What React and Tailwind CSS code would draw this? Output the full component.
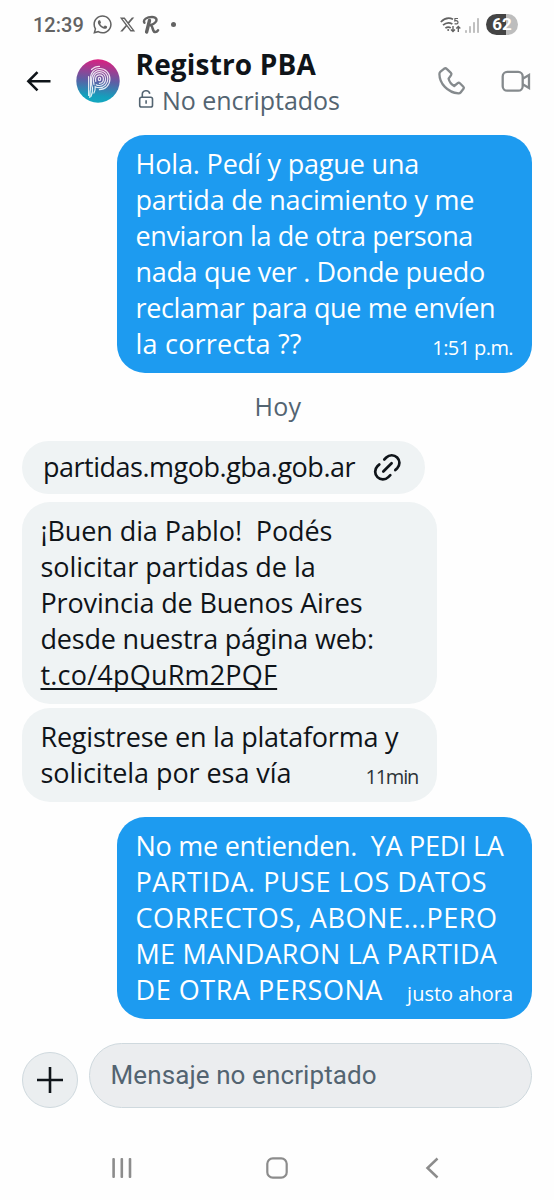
import { FaWhatsapp, FaXTwitter } from 'react-icons/fa6';

// Letter spacing is set per line, so every message is stored as lines
const FIRST_MESSAGE = [
    { text: 'Hola. Pedí y pague una', className: 'tracking-[-0.17px]' },
    { text: 'partida de nacimiento y me', className: 'tracking-[-0.23px]' },
    { text: 'enviaron la de otra persona', className: 'tracking-[-0.38px]' },
    { text: 'nada que ver . Donde puedo', className: 'tracking-[-0.34px]' },
    { text: 'reclamar para que me envíen', className: 'tracking-[-0.37px]' },
    { text: 'la correcta ??', className: 'tracking-[0.22px]' },
];

const REPLY = [
    { text: '¡Buen dia Pablo!  Podés', className: 'tracking-[-0.107px]' },
    { text: 'solicitar partidas de la', className: 'tracking-[-0.04px]' },
    { text: 'Provincia de Buenos Aires', className: 'tracking-[-0.15px]' },
    { text: 'desde nuestra página web:', className: 'tracking-[-0.2px]' },
    { text: 't.co/4pQuRm2PQF', link: true, className: 'tracking-[0.203px]' },
];

const REPLY_END = [
    { text: 'Registrese en la plataforma y', className: 'tracking-[-0.23px]' },
    { text: 'solicitela por esa vía', className: 'tracking-[-0.06px]' },
];

const LAST_MESSAGE = [
    { text: 'No me entienden.  YA PEDI LA', className: 'tracking-[-0.27px]' },
    { text: 'PARTIDA. PUSE LOS DATOS', className: 'tracking-[0.5px]' },
    { text: 'CORRECTOS, ABONE...PERO', className: 'tracking-[0.57px]' },
    { text: 'ME MANDARON LA PARTIDA', className: 'tracking-[0.21px]' },
    { text: 'DE OTRA PERSONA', className: 'tracking-[0.54px]' },
];

function StatusBar() {
    return (
        <div className="flex items-center h-[49px] pl-[33px] pr-9 text-[#636363]">
            <span className="w-[51px] font-[Roboto,sans-serif] font-medium text-[20px] leading-none">12:39</span>
            <FaWhatsapp size={21} className="ml-2" />
            <FaXTwitter size={17} className="ml-1.5" />
            {/* Delivery app mark */}
            <svg width="18" height="20" viewBox="0 0 18 20" className="ml-1.5" fill="none"
                stroke="currentColor" strokeLinecap="round" strokeLinejoin="round">
                <path d="M7.5 5.5 4.6 17" strokeWidth="3.4" />
                <path d="M2.4 7.8C.6 4.4 5 2 10 2c4.600 0 5.600 3.200 3.200 5.500-1.200 1.300-2.600 2-4.200 2.400" strokeWidth="2.400" />
                <path d="M9 10.600c2 .4 1.400 5.800 3.800 6.400 1.400.2 2.600-.7 3.200-1.600" strokeWidth="2.600" />
            </svg>
            <span className="ml-[11px] size-[5px] rounded-full bg-[#636363]" />

            <div className="flex items-center ml-auto">
                <svg width="21" height="18" viewBox="0 0 21 18" fill="none" stroke="currentColor" strokeWidth="1.7">
                    <path d="M.8 6C4.5 2.2 9 1.4 13 3.2" />
                    <path d="M3 9.2c3-2.7 6.2-3 9.4-1.2" />
                    <path d="M5.4 12.2c1.900-1.500 3.600-1.500 5.400-.3" />
                    <circle cx="8.2" cy="14" r="1" fill="currentColor" stroke="none" />
                    <path d="M18 2.500h-3l-.2 2.400c1.600-.5 3.200 0 3.200 1.500s-1.800 1.900-3.400 1.200" strokeWidth="1.2" />
                    <path d="M13 10v5.500m-2-2 2 2 2-2M18.300 16v-5.500m-2 2 2-2 2 2" strokeWidth="1.4" />
                </svg>
                <svg width="15" height="16" viewBox="0 0 15 16" className="ml-1" fill="#c0c0c0">
                    <rect x="0" y="13" width="2" height="3" rx=".8" />
                    <rect x="4" y="9" width="2" height="7" rx=".8" />
                    <rect x="8" y="5" width="2" height="11" rx=".8" />
                    <rect x="12" y="1" width="2" height="15" rx=".8" />
                </svg>
                <div className="flex items-center justify-center ml-1.5 w-8 h-[21px] rounded-full
                    bg-linear-to-r from-[#444] from-62% to-[#bdbdbd] to-62%
                    font-[Roboto,sans-serif] font-bold text-[17px] leading-none text-white">
                    62
                </div>
            </div>
        </div>
    );
}

function Avatar() {
    return (
        <svg width="44" height="44" viewBox="0 0 44 44" fill="none">
            <defs>
                <linearGradient id="avatar" x1="0.55" y1="0" x2="0.45" y2="1">
                    <stop offset="0" stopColor="#dc1f80" />
                    <stop offset="0.5" stopColor="#5c5fa5" />
                    <stop offset="0.85" stopColor="#149fbc" />
                    <stop offset="1" stopColor="#14a8c0" />
                </linearGradient>
            </defs>
            <circle cx="22" cy="22" r="21.7" fill="url(#avatar)" />
            {/* Fingerprint */}
            <g stroke="#fff" strokeOpacity="0.85" strokeWidth="1.2" strokeLinecap="round">
                <ellipse cx="23.5" cy="20" rx="1.2" ry="1.6" />
                <path d="M19.8 22.500c-1-4 .8-6.700 3.700-6.700 2.500 0 3.900 2 3.900 4.300s-1.600 4.200-4 4.200" />
                <path d="M18 25.500c-2-6.500.5-11.800 5.500-11.800 4 0 6.100 3 6.100 6.400s-2.600 6.400-6.200 6.400c-1.400 0-2.400-.3-3.200-.8" />
                <path d="M16.500 29c-3-9.500.4-17.400 7-17.400 5.200 0 8.300 3.900 8.300 8.500s-3.500 8.600-8.400 8.600c-1.800 0-3.200-.4-4.200-1 .2 2.300-.3 4.500-1.300 6.300" />
                <path d="M16.500 29c.3 3.500-.3 6-1.600 8.500M14.500 31V20c0-7 4-10.500 9-10.500 6.200 0 10.400 4.700 10.400 10.500 0 6-4.600 10.700-10.500 10.700" />
                <path d="M12.600 36.500V17.500M13.800 38.500l.4-7M15.500 10.500c2-2 4.500-3.200 8-3.200" />
            </g>
        </svg>
    );
}

function Header() {
    return (
        <header className="flex items-start h-[86px]">
            <svg width="26" height="22" viewBox="0 0 26 22" className="mt-[21px] ml-[26px]" fill="none" stroke="#0f1419"
                strokeWidth="2.6" strokeLinejoin="miter">
                <path d="M24.500 11.300H2.500M11.500 2.200l-9.100 9.100 9.100 9.100" />
            </svg>
            <div className="mt-[10px] ml-[23.5px]">
                <Avatar />
            </div>
            <div className="-mt-[2px] ml-4 whitespace-nowrap">
                <h1 className="font-bold text-[28px] leading-[35px] tracking-[0.165px] text-[#0f1419]">Registro PBA</h1>
                <div className="flex items-center">
                    <svg width="18" height="20" viewBox="0 0 18 20" className="ml-0.5 -mt-0.5" fill="none" stroke="#536471" strokeWidth="1.6">
                        <rect x="1.7" y="8.3" width="12.8" height="9.7" rx="1.8" />
                        <path d="M4.300 8.300V5.700a3.800 3.800 0 0 1 7.500-1M8.100 11.200v3.600" />
                    </svg>
                    <span className="ml-[6.5px] text-[25px] leading-9 tracking-[-0.051px] text-[#536471]">No encriptados</span>
                </div>
            </div>
            <svg width="30" height="32" viewBox="0 0 30 32" className="mt-4 ml-auto" fill="none" stroke="#858a8d"
                strokeWidth="2.3" strokeLinejoin="round">
                <path d="M8.300 3.600q1.300-.8 2.400.3l4.200 4q1 1 .2 2.200l-2.500 3.600q1.200 4.700 5.600 7.300l3.500-2.900q1.100-.9 2.200.2l3.500 3.400q1 1 .1 2.100l-2.900 3.700q-.8 1-2.200.9C11.500 27.400 3.500 18.500 3.400 8.900q0-1.400 1.100-2.300z" />
            </svg>
            <svg width="32" height="24" viewBox="0 0 32 24" className="mt-5 ml-[34.5px] mr-[22px]" fill="none" stroke="#858a8d"
                strokeWidth="2.3">
                <rect x="2.7" y="2.9" width="20" height="18.8" rx="4.5" />
                <path d="M22.700 9.800 29 6v13l-6.300-3.800" />
            </svg>
        </header>
    );
}

function Bubble({ lines, own, time, timeClass, className }) {
    const tone = own ? 'self-end bg-[#1d9bf0] text-white pl-[18.5px]' : 'bg-[#eff3f4] text-[#0f1419] pl-[18.5px]';
    return (
        <div className={`w-[415px] pt-[11px] pr-[19px] rounded-[28px] text-[27px] leading-9 whitespace-pre ${tone} ${className}`}>
            {lines.map((line, i) => (
                <div key={line.text} className="flex items-end justify-between h-9">
                    {line.link ? (
                        <a className={`underline decoration-2 underline-offset-[3px] [text-decoration-skip-ink:none] ${line.className}`}>
                            {line.text}
                        </a>
                    ) : (
                        <span className={line.className}>{line.text}</span>
                    )}
                    {time && i === lines.length - 1 && (
                        <span className={`text-[20px] leading-7 ${timeClass}`}>{time}</span>
                    )}
                </div>
            ))}
        </div>
    );
}

function LinkPill() {
    return (
        <div className="flex items-center w-[403px] h-[53px] pl-[21px] rounded-full bg-[#eff3f4] text-[#0f1419]">
            <span className="-mt-px w-[329.5px] text-[27px] leading-9 tracking-[-0.49px]">partidas.mgob.gba.gob.ar</span>
            <svg width="29" height="29" viewBox="0 0 29 29" fill="none" stroke="currentColor" strokeWidth="2.7" strokeLinecap="round">
                <path d="M11.300 6.500l2-2a7.600 7.600 0 0 1 10.900 10.800l-1.900 1.800" />
                <path d="M17.300 22.100l-2 2a7.600 7.600 0 0 1-10.900-10.800l1.900-1.800" />
                <path d="M10.300 18.500l8.300-8.300" />
            </svg>
        </div>
    );
}

function Composer() {
    return (
        <div className="flex items-end gap-[11px] mt-6 pl-[22px] pr-[22px]">
            <button className="flex items-center justify-center size-14 rounded-full border border-[#cfd9de] bg-[#ebeef0]">
                <svg width="26" height="26" viewBox="0 0 26 26" stroke="#0f1419" strokeWidth="2.6">
                    <path d="M13 0v26M0 13h26" />
                </svg>
            </button>
            <div className="flex items-center flex-1 h-[65px] pl-[20.5px] rounded-full border border-[#cfd9de] bg-[#ebedef]
                font-[Roboto,sans-serif] text-[26px] tracking-[0.1px] text-[#536471]">
                Mensaje no encriptado
            </div>
        </div>
    );
}

function NavBar() {
    return (
        <nav className="flex items-center mt-[49px] pl-[112px] text-[#8c8c8c]">
            <svg width="21" height="22" viewBox="0 0 21 22" fill="currentColor">
                <rect x="0.3" y="1" width="2.6" height="20" rx="1" />
                <rect x="8.5" y="1" width="2.6" height="20" rx="1" />
                <rect x="16.7" y="1" width="2.6" height="20" rx="1" />
            </svg>
            <svg width="22" height="22" viewBox="0 0 22 22" className="ml-[133px]" fill="none" stroke="currentColor" strokeWidth="2.2">
                <rect x="1.3" y="1.3" width="19.4" height="19.4" rx="5.5" />
            </svg>
            <svg width="14" height="22" viewBox="0 0 14 22" className="ml-[137px]" fill="none" stroke="currentColor" strokeWidth="2.5">
                <path d="M12.500 1.500 2.500 11l10 9.500" />
            </svg>
        </nav>
    );
}

export default function App() {
    return (
        <div className="w-[554px] h-[1200px] overflow-hidden bg-[#fefefe] font-['Open_Sans','Noto_Sans',sans-serif]">
            <StatusBar />
            <Header />
            <main className="flex flex-col items-start pl-[22px] pr-[22px]">
                <Bubble own lines={FIRST_MESSAGE} time="1:51 p.m." timeClass="tracking-[-0.595px]" className="h-[238px]" />
                <p className="self-center mt-[15px] ml-0.5 text-[25px] leading-9 tracking-[0.264px] text-[#536471]">Hoy</p>
                <div className="flex flex-col mt-[17px]">
                    <LinkPill />
                    <Bubble lines={REPLY} className="mt-2 h-[202px]" />
                    <Bubble lines={REPLY_END} time="11min" timeClass="tracking-[-1.234px] text-[#2c3338]" className="mt-1 h-[94px]" />
                </div>
                <Bubble own lines={LAST_MESSAGE} time="justo ahora" timeClass="" className="mt-[15px] h-[202px]" />
            </main>
            <Composer />
            <NavBar />
        </div>
    );
}
